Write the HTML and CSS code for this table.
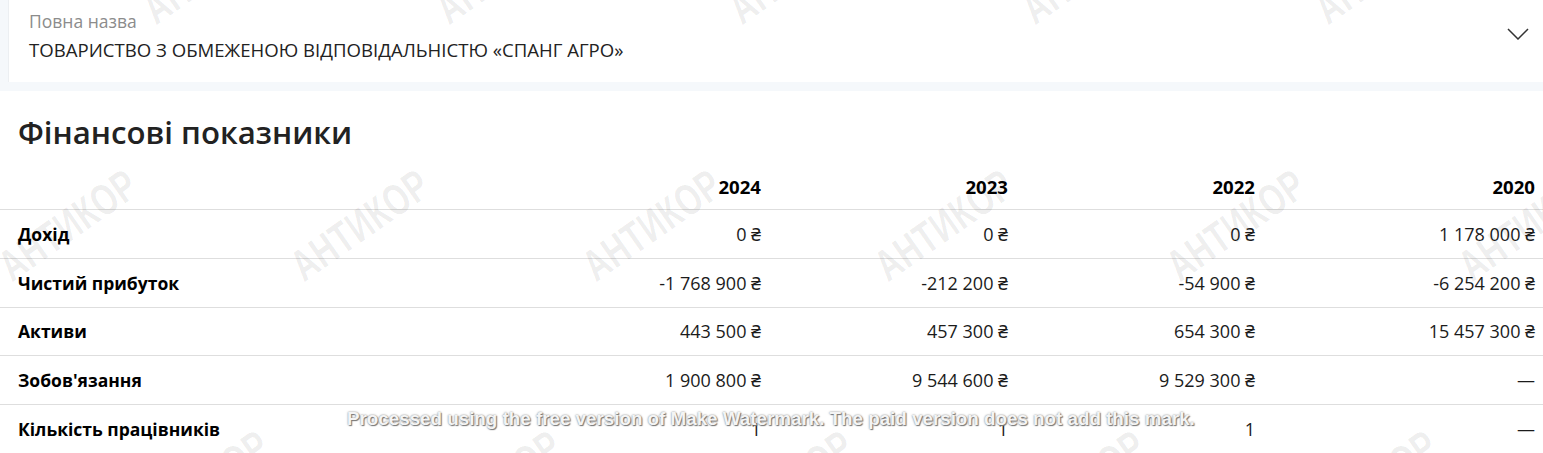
FILE: index.html
```html
<!DOCTYPE html>
<html lang="uk">
<head>
<meta charset="utf-8">
<title>Фінансові показники</title>
<link rel="stylesheet" href="styles.css">
</head>
<body>
<div class="page">
  <section class="name-card">
    <div class="name-text">
      <div class="name-label">Повна назва</div>
      <div class="name-value">ТОВАРИСТВО З ОБМЕЖЕНОЮ ВІДПОВІДАЛЬНІСТЮ «СПАНГ АГРО»</div>
    </div>
    <svg class="chevron" width="22" height="12" viewBox="0 0 22 12" aria-hidden="true">
      <path d="M1 1 L11 11 L21 1" fill="none" stroke="#333" stroke-width="1.5"/>
    </svg>
  </section>

  <section class="fin-card">
    <h2 class="fin-title">Фінансові показники</h2>
    <table class="fin-table">
      <colgroup>
        <col class="c-label"><col class="c-year"><col class="c-year"><col class="c-year"><col>
      </colgroup>
      <thead>
        <tr><th></th><th>2024</th><th>2023</th><th>2022</th><th>2020</th></tr>
      </thead>
      <tbody>
        <tr><td>Дохід</td><td>0 ₴</td><td>0 ₴</td><td>0 ₴</td><td>1 178 000 ₴</td></tr>
        <tr><td>Чистий прибуток</td><td>-1 768 900 ₴</td><td>-212 200 ₴</td><td>-54 900 ₴</td><td>-6 254 200 ₴</td></tr>
        <tr><td>Активи</td><td>443 500 ₴</td><td>457 300 ₴</td><td>654 300 ₴</td><td>15 457 300 ₴</td></tr>
        <tr><td>Зобов'язання</td><td>1 900 800 ₴</td><td>9 544 600 ₴</td><td>9 529 300 ₴</td><td>—</td></tr>
        <tr><td>Кількість працівників</td><td>1</td><td>1</td><td>1</td><td>—</td></tr>
      </tbody>
    </table>
  </section>

  <div class="marks" aria-hidden="true">
    <span class="mark" style="left:212px;top:-32px">АНТИКОР</span>
    <span class="mark" style="left:505px;top:-32px">АНТИКОР</span>
    <span class="mark" style="left:798px;top:-32px">АНТИКОР</span>
    <span class="mark" style="left:1091px;top:-32px">АНТИКОР</span>
    <span class="mark" style="left:1384px;top:-32px">АНТИКОР</span>
    <span class="mark" style="left:68px;top:225px">АНТИКОР</span>
    <span class="mark" style="left:360px;top:225px">АНТИКОР</span>
    <span class="mark" style="left:652px;top:225px">АНТИКОР</span>
    <span class="mark" style="left:944px;top:225px">АНТИКОР</span>
    <span class="mark" style="left:1236px;top:225px">АНТИКОР</span>
    <span class="mark" style="left:1528px;top:225px">АНТИКОР</span>
    <span class="mark" style="left:200px;top:486px">АНТИКОР</span>
    <span class="mark" style="left:492px;top:486px">АНТИКОР</span>
    <span class="mark" style="left:784px;top:486px">АНТИКОР</span>
    <span class="mark" style="left:1076px;top:486px">АНТИКОР</span>
    <span class="mark" style="left:1368px;top:486px">АНТИКОР</span>
  </div>
  <div class="mw-note">Processed using the free version of Make Watermark. The paid version does not add this mark.</div>
</div>
</body>
</html>
```
FILE: styles.css
```css
* { box-sizing: border-box; }
html, body { margin: 0; padding: 0; }
body {
  background: #f5f8fb;
  font-family: "Open Sans", "Noto Sans", sans-serif;
  color: #1b1b1b;
  overflow: hidden;
}
.page { position: relative; width: 1543px; height: 453px; overflow: hidden; }

.name-card {
  margin-left: 8px;
  height: 82px;
  background: #fff;
  border-left: 1px solid #eceff2;
  display: flex;
  align-items: flex-start;
  justify-content: space-between;
  padding: 9px 14px 0 20px;
}
.name-text { display: flex; flex-direction: column; gap: 5px; }
.name-label { font-size: 17.5px; line-height: 24px; color: #8c8c8c; }
.name-value { font-size: 18.6px; line-height: 24px; color: #222; }
.chevron { margin-top: 19px; }

.fin-card {
  margin-top: 9px;
  background: #fff;
}
.fin-title {
  margin: 0;
  padding: 20px 18px 8px;
  font-size: 31.2px;
  line-height: 42px;
  font-weight: 600;
  color: #222;
}
.fin-table {
  width: 100%;
  border-collapse: collapse;
  table-layout: fixed;
  font-size: 18px;
}
.c-label { width: 522px; }
.c-year { width: 247px; }
.fin-table th, .fin-table td {
  height: 48.7px;
  padding: 0 8px 0 18px;
  text-align: right;
  border-bottom: 1px solid #dedede;
  white-space: nowrap;
}
.fin-table th { font-size: 18.6px; font-weight: 700; color: #000; vertical-align: middle; padding-top: 2px; }
.fin-table td { color: #1b1b1b; }
.fin-table td:first-child { text-align: left; font-size: 17.5px; font-weight: 700; color: #000; }

.marks { position: absolute; inset: 0; pointer-events: none; }
.mark {
  position: absolute;
  transform: translate(-50%, -50%) rotate(-35deg) scaleX(0.72);
  font-family: "Liberation Sans", sans-serif;
  font-weight: 700;
  font-size: 44px;
  letter-spacing: 1px;
  color: rgba(0, 0, 0, 0.07);
  white-space: nowrap;
}
.mw-note {
  position: absolute;
  left: 347px;
  top: 408px;
  font-family: "Liberation Sans", sans-serif;
  font-size: 18.8px;
  font-weight: 700;
  color: #f4f4f4;
  text-shadow: 0 0 2px #777, 1px 1px 1px #777;
  white-space: nowrap;
  pointer-events: none;
}
```
